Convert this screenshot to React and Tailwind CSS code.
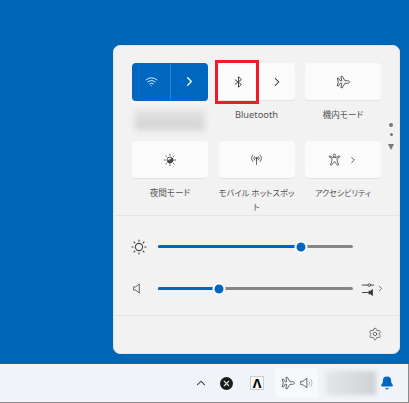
import React from "react";
import { ChevronRight, ChevronUp, Settings, Wifi, Bell, X } from "lucide-react";

const Plane = ({ className }) => (
  <svg viewBox="0 0 16 16" fill="none" stroke="currentColor" strokeWidth="1" strokeLinejoin="round" className={className}>
    <path d="M1.5 3.5h1.4l1.7 3H6.6L5.6 1.5h1.6l3 5h3c1.2 0 2.3.7 2.3 1.5s-1.1 1.5-2.3 1.5h-3l-3 5H5.6l1-5H4.6l-1.7 3H1.5L2.5 8z" />
  </svg>
);

const BluetoothIcon = ({ className }) => (
  <svg viewBox="0 0 16 16" fill="none" stroke="currentColor" strokeWidth="1.2" className={className}>
    <path d="M3.5 5l8 6L8 14.5v-13L11.5 5l-8 6" />
  </svg>
);

const MoonSun = ({ className }) => (
  <svg viewBox="0 0 16 16" fill="none" stroke="currentColor" strokeWidth="1" strokeLinecap="round" className={className}>
    <circle cx="8" cy="8" r="3.4" />
    <path d="M8 4.6a3.4 3.4 0 0 1 0 6.8z" fill="currentColor" transform="rotate(60 8 8)" />
    <path d="M8 1.5v1M8 13.5v1M1.5 8h1M13.5 8h1M3.4 3.4l.7.7M11.9 11.9l.7.7M3.4 12.6l.7-.7M11.9 4.1l.7-.7" />
  </svg>
);

const SunOutline = ({ className }) => (
  <svg viewBox="0 0 16 16" fill="none" stroke="currentColor" strokeWidth="1.1" strokeLinecap="round" className={className}>
    <circle cx="8" cy="8" r="3.6" />
    <path d="M8 1v1.2M8 13.8V15M1 8h1.2M13.8 8H15M3 3l.9.9M12.1 12.1l.9.9M3 13l.9-.9M12.1 3.9L13 3" />
  </svg>
);

const Hotspot = ({ className }) => (
  <svg viewBox="0 0 16 16" fill="none" stroke="currentColor" strokeWidth="1" strokeLinecap="round" className={className}>
    <circle cx="8" cy="6.5" r="1" fill="currentColor" />
    <path d="M8 7.5v6.5M5.6 4.3a3.3 3.3 0 0 0 0 4.4M10.4 4.3a3.3 3.3 0 0 1 0 4.4M3.6 2.5a6 6 0 0 0 0 8M12.4 2.5a6 6 0 0 1 0 8" />
  </svg>
);

const Access = ({ className }) => (
  <svg viewBox="0 0 16 16" fill="none" stroke="currentColor" strokeWidth="1" strokeLinejoin="round" className={className}>
    <circle cx="8" cy="3" r="1.6" />
    <path d="M2 3.5l4 2h4l4-2 .5 1.2L11 7l.4 3 1.6 4.6-1.3.4L8 10.5 4.3 15 3 14.6 4.6 10 5 7 1.5 4.7z" />
  </svg>
);

const Speaker = ({ className, waves }) => (
  <svg viewBox="0 0 16 16" fill="none" stroke="currentColor" strokeWidth="1" strokeLinejoin="round" className={className}>
    <path d="M2 6h2.5L9 2.5v11L4.5 10H2z" />
    {waves && <path d="M11 5.5a3.5 3.5 0 0 1 0 5M13 3.5a6.5 6.5 0 0 1 0 9" strokeWidth="0.8" opacity="0.6" />}
  </svg>
);

const Mixer = ({ className }) => (
  <svg viewBox="0 0 16 16" fill="none" stroke="currentColor" strokeWidth="1" className={className}>
    <path d="M1 3.5h7M11 3.5h4M1 12h7" />
    <circle cx="9.5" cy="3.5" r="1.5" />
    <path d="M9 10.5h2l2-2v7l-2-2H9z" fill="currentColor" />
  </svg>
);

const Tile = ({ children, className = "" }) => (
  <div className={"h-[38px] rounded-[4px] bg-[#fbfbfb] border-b border-[#e3e3e3] flex items-center justify-center text-[#444] " + className}>
    {children}
  </div>
);

const Label = ({ children, size = "text-[8.6px]" }) => (
  <div className={"mt-[7px] text-center leading-[14px] text-[#555] whitespace-nowrap [font-feature-settings:'palt'] " + size}>
    {children}
  </div>
);

const Slider = ({ pct }) => (
  <div className="relative w-[195px] h-[3px] rounded-full bg-[#868686]">
    <div className="h-full rounded-full bg-[#0067c0]" style={{ width: pct + "%" }} />
    <div
      className="absolute top-1/2 -translate-x-1/2 -translate-y-1/2 w-[13px] h-[13px] rounded-full bg-[#0067c0] border-[2.5px] border-white"
      style={{ left: pct + "%" }}
    />
  </div>
);

export default function App() {
  return (
    <div
      className="w-[409px] h-[403px] flex flex-col bg-[#0067b8] overflow-hidden"
      style={{ fontFamily: '"Noto Sans", "Noto Sans CJK JP", sans-serif' }}
    >
      <div className="flex-1 pt-[45px] pl-[113px]">
        <div className="w-[287px] h-[309px] rounded-[7px] bg-[#f2f2f2] border border-[#e4e4e4] flex flex-col">
          <div className="relative h-[170px] shrink-0 pt-[17px] pl-[18px] pr-[19px] border-b border-[#e5e5e5]">
            <div className="h-[78px] grid grid-cols-3 gap-x-[10.5px] w-[249px] items-start">
              <div>
                <Tile className="!bg-[#0067c0] !border-[#0067c0] text-white">
                  <div className="flex-1 flex justify-center border-r border-[#2f80c8] h-full items-center">
                    <Wifi size={13} color="#fff" strokeWidth={1.6} />
                  </div>
                  <div className="w-[37px] flex justify-center">
                    <ChevronRight size={15} color="#fff" strokeWidth={2} />
                  </div>
                </Tile>
                <div className="mt-[9px] mx-[3px] h-[20px] bg-gradient-to-b from-[#e2e2e2] to-[#d2d2d2] blur-[3px]" />
              </div>
              <div>
                <Tile>
                  <div className="w-[40px] flex justify-center">
                    <BluetoothIcon className="w-[13px] h-[14px]" />
                  </div>
                  <div className="flex-1 flex justify-center">
                    <ChevronRight size={14} color="#222" strokeWidth={1.8} />
                  </div>
                </Tile>
                <Label size="text-[9.3px]">Bluetooth</Label>
              </div>
              <div>
                <Tile>
                  <Plane className="w-[14px] h-[14px]" />
                </Tile>
                <Label>機内モード</Label>
              </div>
            </div>

            <div className="grid grid-cols-3 gap-x-[10.5px] w-[249px]">
              <div>
                <Tile>
                  <MoonSun className="w-[14px] h-[14px]" />
                </Tile>
                <Label>夜間モード</Label>
              </div>
              <div>
                <Tile>
                  <Hotspot className="w-[13px] h-[13px]" />
                </Tile>
                <Label size="text-[8.3px]">
                  モバイル ホットスポッ<br />ト
                </Label>
              </div>
              <div>
                <Tile>
                  <Access className="w-[13px] h-[13px]" />
                  <ChevronRight size={10} color="#444" className="ml-[7px]" />
                </Tile>
                <Label size="text-[8px]">アクセシビリティ</Label>
              </div>
            </div>

            <div className="absolute left-[274px] top-[77px] flex flex-col items-center">
              <div className="w-[4px] h-[4px] rounded-full bg-[#777]" />
              <div className="w-[3px] h-[3px] rounded-full bg-[#777] mt-[6px]" />
              <div className="mt-[8px] w-0 h-0 border-x-[3.5px] border-x-transparent border-t-[6px] border-t-[#777]" />
            </div>

            <div className="absolute left-[101px] top-[14px] w-[44px] h-[44px] border-[3px] border-[#ee1c25]" />
          </div>

          <div className="h-[100px] shrink-0 border-b border-[#e5e5e5] pt-[29px] pl-[17px]">
            <div className="flex items-center h-[3px]">
              <SunOutline className="w-[16px] h-[16px] text-[#444] shrink-0" />
              <div className="ml-[11px]"><Slider pct={73.5} /></div>
            </div>
            <div className="flex items-center h-[3px] mt-[39px]">
              <Speaker className="w-[13px] h-[13px] shrink-0 text-[#444] ml-[1px] mr-[2px]" />
              <div className="ml-[11px]"><Slider pct={31.5} /></div>
              <Mixer className="ml-[8px] w-[14px] h-[14px] text-[#333]" />
              <ChevronRight size={9} color="#444" className="ml-[1px]" />
            </div>
          </div>

          <div className="flex-1 flex items-center justify-end pr-[17px] pb-[1px]">
            <Settings size={14} color="#444" strokeWidth={1.2} />
          </div>
        </div>
      </div>

      <div className="h-[39px] shrink-0 bg-[#f0f3f7] border-b border-r border-[#8b8b8b] flex items-center">
        <ChevronUp size={14} color="#222" strokeWidth={1.8} className="ml-[194px]" />
        <div className="ml-[12px] w-[13px] h-[13px] rounded-full bg-[#1b1b1b] flex items-center justify-center">
          <X size={9} color="#ddd" strokeWidth={3} />
        </div>
        <div className="ml-[17px] w-[14px] h-[14px] bg-[#f8f8f8] border border-[#ccc] flex items-center justify-center text-[13px] leading-none font-bold text-black">
          Λ
        </div>
        <div className="ml-[11px] w-[43px] h-[30px] rounded-[4px] bg-[#f7f9fb] flex items-center justify-center gap-[4px] text-[#555]">
          <Plane className="w-[14px] h-[14px]" />
          <Speaker waves className="w-[14px] h-[14px]" />
        </div>
        <div className="ml-[8px] w-[50px] h-[24px] bg-gradient-to-r from-[#e4e6e9] to-[#cfd1d4] blur-[2px]" />
        <Bell size={14} color="#0067c0" fill="#0067c0" className="ml-[4px]" />
      </div>
    </div>
  );
}
